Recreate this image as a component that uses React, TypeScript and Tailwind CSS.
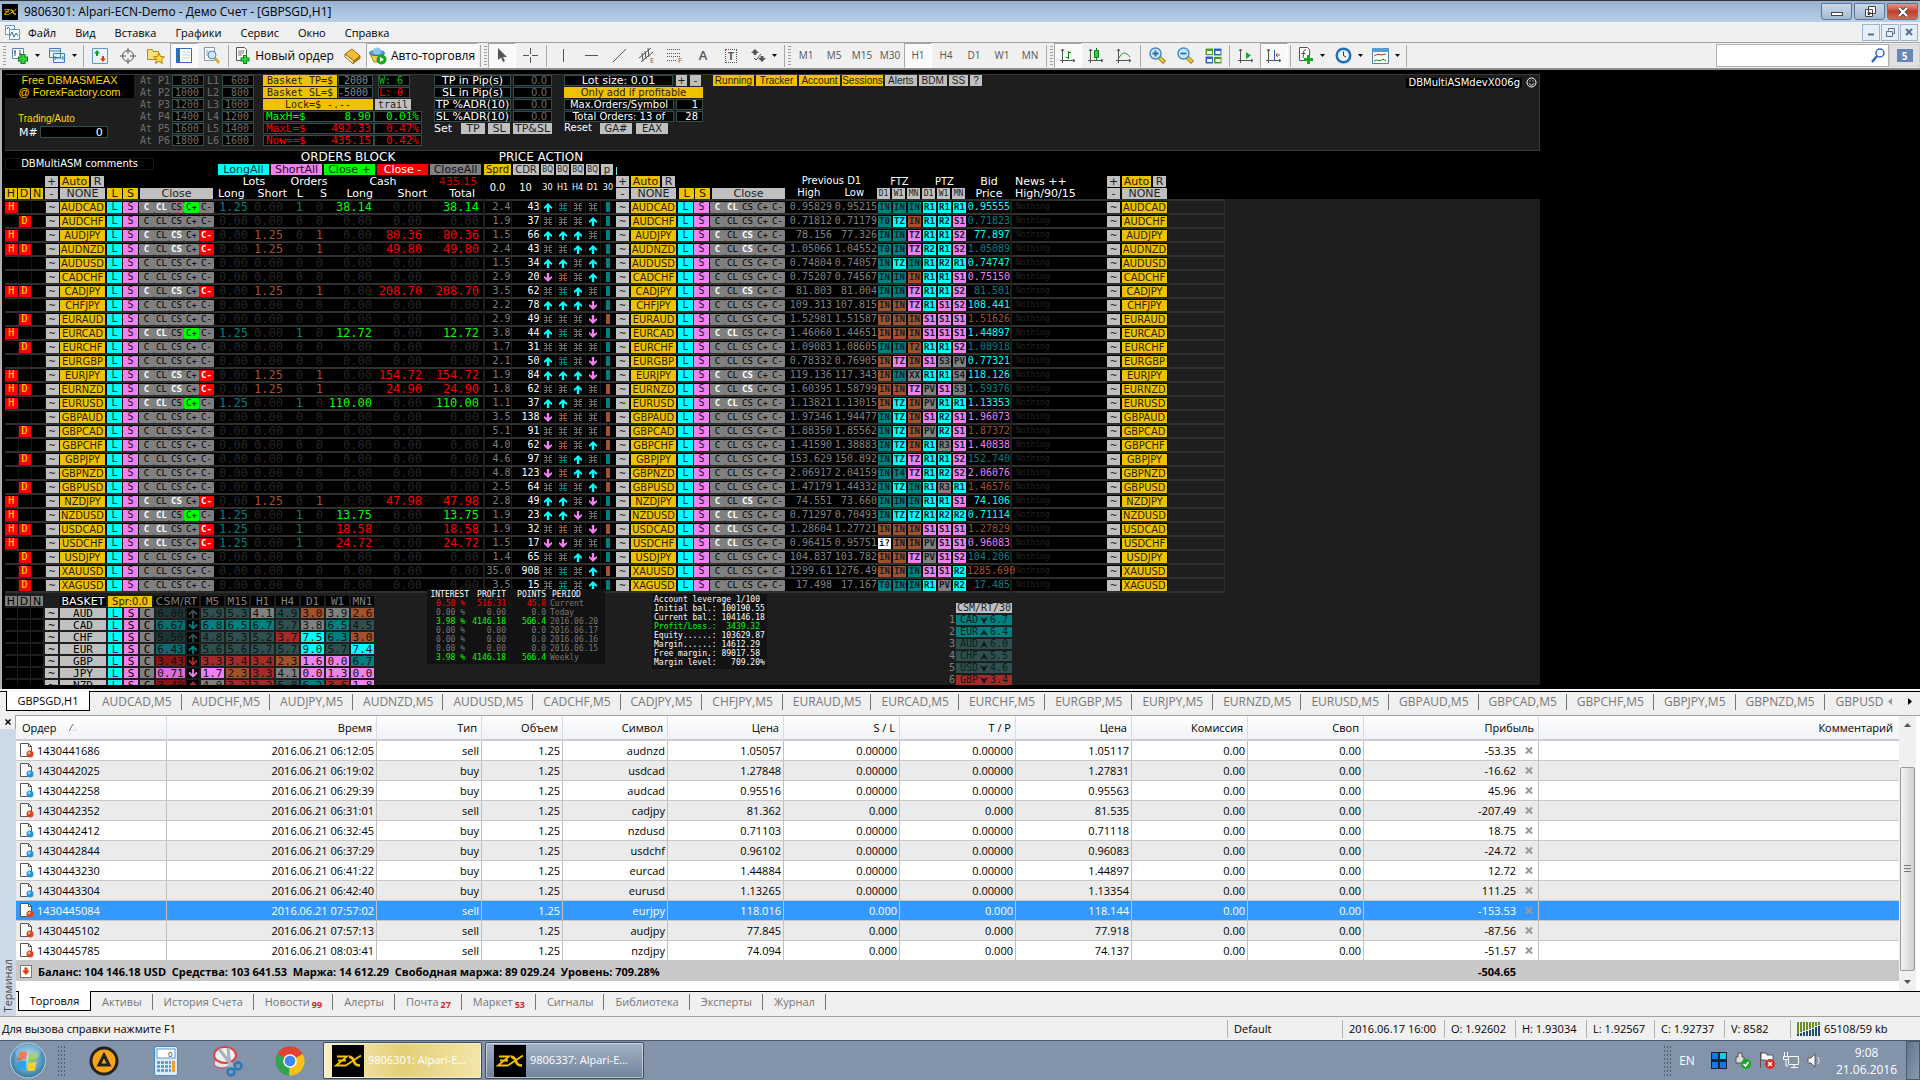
import { type ReactNode } from "react";
import { clsx } from "clsx";

const COLORS = {
  t: { bg: "bg-[#008080]", text: "text-[#008080]" },
  c: { bg: "bg-[#00ffff]", text: "text-[#00ffff]" },
  v: { bg: "bg-[#ee82ee]", text: "text-[#ee82ee]" },
  b: { bg: "bg-[#a0522d]", text: "text-[#a0522d]" },
  g: { bg: "bg-[#808080]", text: "text-[#696969]" },
  s: { bg: "bg-[#2f4f4f]", text: "text-[#2f4f4f]" },
  r: { bg: "bg-[#a52a2a]", text: "text-[#a52a2a]" },
  w: { bg: "bg-white", text: "text-white" },
};

type ColorKey = keyof typeof COLORS;

const MONO = "font-['DejaVu_Sans_Mono',monospace]";
const TAHOMA = "font-['DejaVu_Sans_Condensed','DejaVu_Sans',sans-serif]";

// symbol | flags | side | profit | spread | cdr | arrows | bar | high | low | zones | bid | bid colour
const PAIRS = `
AUDCAD|H|L|38.14|2.4|43|utxx|t|0.95829|0.95215|INt INt INt R1c R1c R1c|0.95555|c
AUDCHF|D|||1.9|37|xxxu|t|0.71812|0.71179|T0t TZc INb R1c R2c S1v|0.71823|t
AUDJPY|H|S|-80.36|1.5|66|uuux|t|78.156|77.326|INt INt TZv R1c R1c S2v|77.897|c
AUDNZD|HD|S|-49.80|2.4|43|xxuu|t|1.05066|1.04552|T0t INt TZv R2c R1c S2v|1.05089|t
AUDUSD||||1.5|34|uuxu|t|0.74804|0.74057|INt TZc INt R1c R2c R1c|0.74747|c
CADCHF||||2.9|20|dbxu|t|0.75207|0.74567|INt INt INb R1c R1c S1v|0.75150|v
CADJPY|HD|S|-208.70|3.5|62|xtux|t|81.803|81.004|INt INt TZv R1c R1c S2v|81.501|t
CHFJPY||||2.2|78|uuud|t|109.313|107.815|INb INb TZv R1c S1v S2v|108.441|c
EURAUD|D|||2.9|49|xxxd|b|1.52981|1.51587|T0b INb INb S1v S1v S1v|1.51626|b
EURCAD|H|L|12.72|3.8|44|utxd|t|1.46060|1.44651|INb INb INb S1v S1v S1v|1.44897|c
EURCHF|D|||1.7|31|xxxx|t|1.09083|1.08605|INt INt T2b R1c R1c S2v|1.08918|t
EURGBP||||2.1|50|utxd|t|0.78332|0.76905|INb TZv INb S1v S3g PVg|0.77321|c
EURJPY|H|S|-154.72|1.9|84|uuud|t|119.136|117.343|INb INt XXg R1c R1c S4g|118.126|c
EURNZD|HD|S|-24.90|1.8|62|xxux|b|1.60395|1.58799|INb INb TZv PVg S1v S3g|1.59376|t
EURUSD|H|L|110.00|1.1|37|uuxx|t|1.13821|1.13015|INb TZc INb PVg R1c R1c|1.13353|c
GBPAUD||||3.5|138|dbxx|b|1.97346|1.94477|INt TZc INb S1v R2c S1v|1.96073|v
GBPCAD|D|||5.1|91|xxxx|b|1.88350|1.85562|INt TZc INb PVg R2c S1v|1.87372|b
GBPCHF||||4.0|62|dbxu|b|1.41590|1.38883|INt TZc INb R1c R3g S1v|1.40838|v
GBPJPY|D|||4.6|97|xtux|t|153.629|150.892|INt TZc TZv R1c R1c S2v|152.740|t
GBPNZD||||4.8|123|dbuu|b|2.06917|2.04159|INt T4t TZv R1c R2c S2v|2.06076|v
GBPUSD|D|||2.5|64|xtxu|b|1.47179|1.44332|INt TZc INt R1c R3g R1c|1.46576|b
NZDJPY|H|S|-47.98|2.8|49|uuxd|t|74.551|73.660|INt INt INt R1c R1c S1v|74.106|c
NZDUSD|H|L|13.75|1.9|23|uudx|t|0.71297|0.70493|INt TZc TZc R1c R2c R2c|0.71114|c
USDCAD|HD|L|-18.58|1.9|32|xbxd|b|1.28604|1.27721|INb INb INb S1v S1v S1v|1.27829|b
USDCHF|H|L|-24.72|1.5|17|ddxx|t|0.96415|0.95751|i?w INb INb PVg S1v S1v|0.96083|v
USDJPY|D|||1.4|65|xxud|t|104.837|103.782|INb INb TZv PVg S1v S2v|104.206|t
XAUUSD|D|||35.0|908|xtxu|b|1299.61|1276.49|INb INb INt S1v S1v R2c|1285.690|b
XAGUSD|D|||3.5|15|xtxu|t|17.498|17.167|T0t INt INt R1c PVg R2c|17.485|t`
  .trim()
  .split("\n")
  .map((line) => {
    const [symbol, flags, side, profit, spread, cdr, arrows, bar, high, low, zones, bid, bidColor] = line.split("|");
    return { symbol, flags, side, profit, spread, cdr, arrows, bar, high, low, zones: zones.split(" "), bid, bidColor };
  });

type Pair = (typeof PAIRS)[number];

const BASKETS = [
  { name: "AUD", csm: "6.00", bg: "bg-[#1d3636]", up: true, color: "s", values: "5.9s 5.3s 4.1g 4.9s 3.0b 3.9g 2.6b" },
  { name: "CAD", csm: "6.67", bg: "bg-[#066e6e]", up: false, color: "t", values: "6.8t 6.5t 6.7t 5.7s 3.8g 6.5t 4.5s" },
  { name: "CHF", csm: "5.50", bg: "bg-[#1d3636]", up: true, color: "s", values: "4.8s 5.3s 5.2s 3.7r 7.5c 6.3t 3.0b" },
  { name: "EUR", csm: "6.43", bg: "bg-[#066e6e]", up: true, color: "t", values: "5.6s 5.6s 5.7s 5.7s 9.0c 5.7s 7.4c" },
  { name: "GBP", csm: "3.43", bg: "bg-[#8b1515]", up: false, color: "r", values: "3.3r 3.4r 3.4r 2.3b 1.6v 0.0v 6.7t" },
  { name: "JPY", csm: "0.71", bg: "bg-[#da70d6]", up: false, color: "v", values: "1.7v 2.3b 3.3r 4.1g 0.0v 1.3v 0.0v" },
  { name: "NZD", csm: "3.40", bg: "bg-[#8b1515]", up: true, color: "r", values: "4.0g 3.2r 3.2r 5.8s 6.2t 3.6r 1.8v" },
];

const ORDERS = `
1430441686|06:12:05|sell|audnzd|1.05057|0.00000|1.05117|-53.35
1430442025|06:19:02|buy|usdcad|1.27848|0.00000|1.27831|-16.62
1430442258|06:29:39|buy|audcad|0.95516|0.00000|0.95563|45.96
1430442352|06:31:01|sell|cadjpy|81.362|0.000|81.535|-207.49
1430442412|06:32:45|buy|nzdusd|0.71103|0.00000|0.71118|18.75
1430442844|06:37:29|buy|usdchf|0.96102|0.00000|0.96083|-24.72
1430443230|06:41:22|buy|eurcad|1.44884|0.00000|1.44897|12.72
1430443304|06:42:40|buy|eurusd|1.13265|0.00000|1.13354|111.25
1430445084|07:57:02|sell|eurjpy|118.016|0.000|118.144|-153.53
1430445102|07:57:13|sell|audjpy|77.845|0.000|77.918|-87.56
1430445785|08:03:41|sell|nzdjpy|74.094|0.000|74.137|-51.57`
  .trim()
  .split("\n")
  .map((line) => line.split("|"));

const SELECTED_ORDER = "1430445084";

const CHART_TABS = [
  "AUDCAD", "AUDCHF", "AUDJPY", "AUDNZD", "AUDUSD", "CADCHF", "CADJPY", "CHFJPY", "EURAUD", "EURCAD",
  "EURCHF", "EURGBP", "EURJPY", "EURNZD", "EURUSD", "GBPAUD", "GBPCAD", "GBPCHF", "GBPJPY", "GBPNZD",
];

const TERMINAL_TABS: { label: string; count?: number }[] = [
  { label: "Активы" },
  { label: "История Счета" },
  { label: "Новости", count: 99 },
  { label: "Алерты" },
  { label: "Почта", count: 27 },
  { label: "Маркет", count: 53 },
  { label: "Сигналы" },
  { label: "Библиотека" },
  { label: "Эксперты" },
  { label: "Журнал" },
];

/* ---------- window chrome ---------- */

function AlpariLogo({ className }: { className?: string }) {
  return (
    <svg className={className} viewBox="0 0 32 32" aria-hidden="true">
      <rect width="32" height="32" fill="#000" />
      <path d="M5 11.500h10L4 20.500h9M6 15.500h8M29 10.500L13 21" fill="none" stroke="#f2c200" strokeWidth="1.800" />
      <path d="M17 11.500q4 1 5 5t6 4" fill="none" stroke="#f2c200" strokeWidth="2.600" />
    </svg>
  );
}

function TitleBar() {
  const button = "flex h-[17px] w-[31px] items-center justify-center rounded-b-[3px] border border-[#5f7690]";
  return (
    <header className="flex h-[22px] items-center gap-1.5 border-t border-[#333] bg-linear-to-b from-[#97b1d0] to-[#b9d0ea] px-0.5">
      <AlpariLogo className="size-4" />
      <h1 className="flex-1 text-xs leading-5 whitespace-nowrap">9806301: Alpari-ECN-Demo - Демо Счет - [GBPSGD,H1]</h1>
      <div className="flex gap-0.5">
        <button aria-label="Свернуть" className={clsx(button, "bg-linear-to-b from-[#c9d8ea] to-[#a4bad3]")}>
          <svg width="12" height="10"><rect x=".5" y="5.500" width="11" height="3" fill="#fff" stroke="#444" /></svg>
        </button>
        <button aria-label="Развернуть" className={clsx(button, "bg-linear-to-b from-[#c9d8ea] to-[#a4bad3]")}>
          <svg width="12" height="12" fill="#fff" stroke="#444"><path d="M4.500.5h7v7h-7zM1.500 3.500h7v7h-7zM4 6.500h2v2H4z" /></svg>
        </button>
        <button aria-label="Закрыть" className={clsx(button, "border-[#5c1c18] bg-linear-to-b from-[#e0988a] via-[#c2402a] to-[#d46a50]")}>
          <svg width="12" height="10"><path d="M2 1l8 8M10 1L2 9" stroke="#444" strokeWidth="4" /><path d="M2 1l8 8M10 1L2 9" stroke="#fff" strokeWidth="2.200" /></svg>
        </button>
      </div>
    </header>
  );
}

function MenuBar() {
  const mdi = "flex h-[17px] w-[18px] items-center justify-center border border-[#9fb2c6] bg-[#e4effa]";
  return (
    <nav className="flex h-[21px] items-center border-b border-[#a0a0a0] bg-[#f0f0f0] pr-0.5 pl-[5px]">
      <svg width="15" height="15" viewBox="0 0 15 15" fill="#fff" stroke="#5b9bd5">
        <path d="M.5.5h9v9h-9z" /><path d="M4.500 4.500h10v10h-10z" /><path d="M5 11l2-4 2 5 2-4 2 3M2 4l1-2 2 2" fill="none" stroke="#2f6fb5" />
      </svg>
      <div className="flex flex-1 gap-[19px] pl-2 text-[11px] leading-none">
        {["Файл", "Вид", "Вставка", "Графики", "Сервис", "Окно", "Справка"].map((item) => (
          <button key={item}>{item}</button>
        ))}
      </div>
      <div className="flex gap-px">
        <button aria-label="Свернуть окно графика" className={mdi}><svg width="8" height="8"><path d="M1 6.500h6" stroke="#5a7088" strokeWidth="2" /></svg></button>
        <button aria-label="Восстановить окно графика" className={mdi}>
          <svg width="9" height="9" fill="none" stroke="#5a7088"><path d="M2.500 2.500v-2h6v5h-2M.5 3.500h6v5h-6z" /></svg>
        </button>
        <button aria-label="Закрыть окно графика" className={mdi}><svg width="8" height="8"><path d="M1 1l6 6M7 1L1 7" stroke="#5a7088" strokeWidth="2" /></svg></button>
      </div>
    </nav>
  );
}

function ToolButton({ label, pressed, wide, children }: { label: string; pressed?: boolean; wide?: boolean; children: ReactNode }) {
  return (
    <button
      aria-label={label}
      className={clsx(
        "flex h-[25px] items-center justify-center gap-1.5 text-[10px] text-[#555]",
        wide ? "w-[37px]" : "w-7",
        pressed && "border border-[#a8a8a8] border-r-white border-b-white bg-[#f9f9f9]"
      )}
    >
      {children}
      {wide && <svg width="5" height="3"><path d="M0 0h5L2.500 3z" fill="#000" /></svg>}
    </button>
  );
}

function Sep() {
  return <span className="mx-[2px] h-[22px] w-px shrink-0 bg-[#a8a8a8]" />;
}

function Grip() {
  return <span className="mx-px h-[20px] w-[3px] shrink-0 bg-[repeating-linear-gradient(#a0a0a0_0_1px,transparent_1px_3px)]" />;
}

function Axes({ children }: { children: ReactNode }) {
  return (
    <svg width="16" height="16" fill="none" stroke="#555">
      <path d="M2.500 1v14M0 12.500h15M1 3l1.500-2L4 3M13 11l2 1.500-2 1.500" />
      {children}
    </svg>
  );
}

function Magnifier({ plus }: { plus?: boolean }) {
  return (
    <svg width="17" height="17" viewBox="0 0 17 17" fill="none">
      <path d="M10 10l5.500 5.500" stroke="#8a6a10" strokeWidth="4" />
      <path d="M10 10l5 5" stroke="#f5c52e" strokeWidth="2.500" />
      <circle cx="6.500" cy="6.500" r="5.500" fill="#cfe9fb" stroke="#3f87c4" strokeWidth="1.400" />
      <path d={plus ? "M3.500 6.500h6M6.500 3.500v6" : "M3.500 6.500h6"} stroke="#1f6fae" strokeWidth="1.800" />
    </svg>
  );
}

function Toolbar() {
  return (
    <div className="flex h-[27px] items-center border-b-2 border-[#8c8c8c] bg-[#f0f0f0] pl-0.5">
      <Grip />
      <ToolButton label="Новый график" wide>
        <svg width="18" height="18" viewBox="0 0 18 18">
          <path d="M1.500 1.500h11v10h-11z" fill="#fff" stroke="#5588b8" /><path d="M4 3v6M9 3v6M3 5h2M8 7h2" stroke="#456" />
          <path d="M12 7v10M7 12h10" stroke="#0a7d14" strokeWidth="5" /><path d="M12 8v8M8 12h8" stroke="#2fd33c" strokeWidth="3" />
        </svg>
      </ToolButton>
      <ToolButton label="Профили" wide>
        <svg width="18" height="18" fill="#e4f0fb" stroke="#3f7fc0"><path d="M1.500 1.500h11v9h-11zM5.500 6.500h11v9h-11zM1.500 4h11M7 11h8M7 9v4M15 9v4" /></svg>
      </ToolButton>
      <Sep />
      <ToolButton label="Обзор рынка">
        <svg width="16" height="16"><path d="M.5.5h15v15H.5z" fill="#eef6fd" stroke="#5b9bd5" /><path d="M5 2l3 3.500H6V8H4V5.500H2z" fill="#12a01c" /><path d="M11 14l3-3.500h-2V8h-2v2.500H8z" fill="#d8400e" /></svg>
      </ToolButton>
      <ToolButton label="Окно данных">
        <svg width="16" height="16" fill="none" stroke="#555"><circle cx="8" cy="8" r="5.500" /><path d="M8 0v6M8 10v6M0 8h6M10 8h6" /></svg>
      </ToolButton>
      <ToolButton label="Навигатор">
        <svg width="18" height="16"><path d="M.5 1.500h5l1 2h5v8H.5z" fill="#f7df7c" stroke="#b08a1c" /><path d="M12 5l1.600 3.500 3.900.4-2.900 2.600.8 3.900L12 13.400l-3.400 2 .8-3.900-2.900-2.600 3.900-.4z" fill="#ffd83a" stroke="#b07d10" /></svg>
      </ToolButton>
      <ToolButton label="Терминал" pressed>
        <svg width="16" height="15"><path d="M.5.5h15v14H.5z" fill="#fff" stroke="#2d6db5" /><path d="M0 0h4v15H0z" fill="#2d6db5" /><path d="M6 4h8M6 7h8M6 10h8" stroke="#b8d4f0" /></svg>
      </ToolButton>
      <ToolButton label="Тестер стратегий">
        <svg width="18" height="18"><path d="M1.500.5h10v13h-10z" fill="#fff" stroke="#8899aa" /><path d="M4 3v6M7 4v4" stroke="#99a" /><circle cx="9" cy="8" r="4" fill="#cfe6f8" stroke="#4a86b8" /><path d="M12 11l4 5" stroke="#d9a520" strokeWidth="2.500" /></svg>
      </ToolButton>
      <Sep />
      <button className="flex h-[25px] w-[107px] items-center justify-center gap-1 text-xs leading-none whitespace-nowrap text-black">
        <svg className="shrink-0" width="16" height="18"><path d="M1.500.5h8l2 2v11h-10z" fill="#fff" stroke="#555" /><path d="M3 4h6M3 6h6M3 8h4" stroke="#777" /><path d="M10 8v9M5.500 12.500h9" stroke="#0a8a14" strokeWidth="4" /><path d="M10 9v7M6.500 12.500h7" stroke="#2fd33c" strokeWidth="2" /></svg>
        Новый ордер
      </button>
      <ToolButton label="MetaEditor">
        <svg width="17" height="16"><path d="M1 6l7-5 8 7-6 5z" fill="#f0bf35" stroke="#9a6c0c" /><path d="M1 6v3l8 6.500 1-2.500z" fill="#fff3c4" stroke="#9a6c0c" /><path d="M10 13l6-5v2.500l-7 5z" fill="#c08a18" stroke="#9a6c0c" /></svg>
      </ToolButton>
      <button className="flex h-[25px] w-[112px] items-center justify-center gap-1 border border-[#a8a8a8] border-r-white border-b-white bg-[#f9f9f9] text-xs leading-none whitespace-nowrap text-black">
        <svg className="shrink-0" width="18" height="18"><path d="M1 7c4 2 10 2 14 0l-3 8H5z" fill="#f4cf4a" stroke="#a8831c" /><ellipse cx="8" cy="6" rx="7.500" ry="2.500" fill="#5aa6dc" stroke="#2f6fa5" /><ellipse cx="8" cy="4" rx="4" ry="3.500" fill="#8cc6ee" /><circle cx="12.500" cy="12.500" r="5" fill="#17a81f" /><path d="M11 10v5l4-2.500z" fill="#fff" /></svg>
        Авто-торговля
      </button>
      <Sep />
      <Grip />
      <ToolButton label="Курсор" pressed>
        <svg width="10" height="15"><path d="M1 0v12l3-2.500L6 14l2-1-2-4h4z" fill="#555" /></svg>
      </ToolButton>
      <ToolButton label="Перекрестие"><svg width="15" height="15" stroke="#555"><path d="M7.500 0v6M7.500 9v6M0 7.500h6M9 7.500h6" /></svg></ToolButton>
      <Sep />
      <ToolButton label="Вертикальная линия"><svg width="3" height="13"><path d="M1.500 0v13" stroke="#555" /></svg></ToolButton>
      <ToolButton label="Горизонтальная линия"><svg width="13" height="3"><path d="M0 1.500h13" stroke="#555" /></svg></ToolButton>
      <ToolButton label="Трендовая линия"><svg width="13" height="13"><path d="M0 13L13 0" stroke="#555" /></svg></ToolButton>
      <ToolButton label="Равноудаленный канал">
        <svg width="17" height="17" stroke="#555" fill="none"><path d="M0 11L12 1M2 15L14 5M3 6l1 8M6 4l1 8M9 1l1 9" /><text x="11" y="16" fontSize="7" fill="#555" stroke="none">E</text></svg>
      </ToolButton>
      <ToolButton label="Линии Фибоначчи">
        <svg width="17" height="17" stroke="#555" fill="none"><path d="M0 2.500h14M0 6.500h14M0 9.500h14M0 13.500h9" strokeDasharray="1 1" /><text x="11" y="16" fontSize="7" fill="#555" stroke="none">F</text></svg>
      </ToolButton>
      <ToolButton label="Текст"><span className="text-[13px] font-semibold">A</span></ToolButton>
      <ToolButton label="Текстовая метка"><span className="border border-dotted border-[#555] px-0.5 text-[11px] leading-3 font-bold">T</span></ToolButton>
      <ToolButton label="Стрелки" wide>
        <svg width="15" height="14"><path d="M4 0l4 4H5.500v2h-3V4H0zM11 13l4-4h-2.500V7h-3v2H7z" fill="#555" /><path d="M3 9l2 2 5-6" fill="none" stroke="#555" /></svg>
      </ToolButton>
      <Sep />
      <Grip />
      {["M1", "M5", "M15", "M30", "H1", "H4", "D1", "W1", "MN"].map((tf) => (
        <ToolButton key={tf} label={tf} pressed={tf === "H1"}>{tf}</ToolButton>
      ))}
      <Sep />
      <Grip />
      <ToolButton label="Бары" pressed><Axes><path d="M8.500 3v8M8 4.500h3M6 9.500h2.500" stroke="#0a8a14" /></Axes></ToolButton>
      <ToolButton label="Свечи"><Axes><path d="M8.500 0v12" stroke="#0a7d14" /><path d="M6.500 2.500h4v7h-4z" fill="#2fd33c" stroke="#0a7d14" /></Axes></ToolButton>
      <ToolButton label="Линия"><Axes><path d="M3 10c3-6 6-7 11-1" stroke="#2a9a34" /></Axes></ToolButton>
      <Sep />
      <ToolButton label="Увеличить"><Magnifier plus /></ToolButton>
      <ToolButton label="Уменьшить"><Magnifier /></ToolButton>
      <ToolButton label="Окна мозаикой">
        <svg width="17" height="16" stroke="#fff"><path d="M0 0h8.500v8H0zM8.500 8H17v8H8.500z" fill="#4a9c1c" /><path d="M8.500 0H17v8H8.500zM0 8h8.500v8H0z" fill="#2b62c4" /><path d="M2 4.500h5M10.500 4.500h5M2 12.500h5M10.500 12.500h5" strokeWidth="3" /></svg>
      </ToolButton>
      <Sep />
      <ToolButton label="Автопрокрутка"><Axes><path d="M8 4v7l5-3.500z" fill="#1da528" stroke="none" /></Axes></ToolButton>
      <ToolButton label="Сдвиг графика" pressed><Axes><path d="M8.500 2v10" stroke="#2b62c4" /><path d="M14 7H10M11.500 5L10 7l1.500 2" stroke="#c8400e" /></Axes></ToolButton>
      <Sep />
      <ToolButton label="Индикаторы" wide>
        <svg width="16" height="18"><path d="M1.500.5h8l2 2v11h-10z" fill="#fff" stroke="#555" /><path d="M8 3c-3-1-2 3-3 8M3.500 6.500h4" fill="none" stroke="#444" /><path d="M10.500 8v9M6 12.500h9" stroke="#17a81f" strokeWidth="3" /></svg>
      </ToolButton>
      <ToolButton label="Периоды" wide>
        <svg width="17" height="17"><circle cx="8.500" cy="8.500" r="8" fill="#1d6fc0" /><circle cx="8.500" cy="8.500" r="5.500" fill="#e8f4ff" /><path d="M8.500 4.500v4l2.500 1.500" fill="none" stroke="#234" /></svg>
      </ToolButton>
      <ToolButton label="Шаблоны" wide>
        <svg width="17" height="16"><path d="M.5.5h16v15H.5z" fill="#fff" stroke="#4a86b8" /><path d="M0 0h17v4H0z" fill="#5b9bd5" /><path d="M2 8l4-2 3 1 5-1" fill="none" stroke="#b8300e" /><path d="M2 13l3-1 3 1 3-2 3 2" fill="none" stroke="#0a8a14" /></svg>
      </ToolButton>
      <Sep />
      <div className="ml-auto flex h-[23px]">
        <div className="flex w-[173px] items-center border border-[#b0b0b0] bg-white">
          <input aria-label="Поиск" className="min-w-0 flex-1 px-1 text-xs outline-none" />
          <svg width="17" height="15" fill="none"><circle cx="9" cy="5" r="4" stroke="#3a66c8" strokeWidth="1.500" /><path d="M6 8l-5 6" stroke="#3a66c8" strokeWidth="2.500" /></svg>
        </div>
        <button aria-label="Сообщения" className="flex w-[31px] items-center justify-center border border-[#d0d0d0] bg-[#e0e0e0]">
          <span className="flex h-[13px] w-4 items-center justify-center bg-[#6a85b8] text-[10px] leading-none font-bold text-white">5</span>
        </button>
      </div>
    </div>
  );
}

/* ---------- expert advisor panel ---------- */

const BOX = "flex h-[11px] items-center border border-[#2f4f4f] bg-black leading-none whitespace-nowrap";
const SILVER = "flex h-[11px] items-center justify-center bg-[#c0c0c0] leading-none whitespace-nowrap text-[#1e1e1e]";
const GOLD = "flex h-[11px] items-center justify-center bg-[#eec200] leading-none whitespace-nowrap text-[#2b1d00]";

function SettingsPanel() {
  const levels = [["800", "600"], ["1000", "800"], ["1200", "1000"], ["1400", "1200"], ["1600", "1400"], ["1800", "1600"]];
  const results = [
    ["MaxH=$", "8.90", "0.01%", "text-[#00ff00]"],
    ["MaxL=$", "492.33", "0.47%", "text-[#ff0000]"],
    ["Now==$", "435.15", "0.42%", "text-[#ff0000]"],
  ];
  return (
    <section className="flex h-[77px] items-start border border-l-0 border-[#3a3a3a] bg-[#1e1e1e] font-['DejaVu_Sans',sans-serif] text-[10px] leading-none whitespace-nowrap">
      <div className="w-[135px] text-[#ffd800]">
        <div className="flex w-[129px] flex-col gap-px bg-black text-center font-['Liberation_Sans',sans-serif] text-[11px]">
          <span>Free DBMASMEAX</span>
          <span>@ ForexFactory.com</span>
        </div>
        <p className="pt-4 pl-[13px] font-['Liberation_Sans',sans-serif]">Trading/Auto</p>
        <label className="flex items-center pt-0.5 pl-[14px] text-[11px] text-white">
          M#
          <input readOnly value="0" className="ml-0.5 h-3 w-[68px] border border-[#2f4f4f] bg-black pr-1 text-right" />
        </label>
      </div>
      <div className={clsx("flex w-[123px] flex-col gap-px text-[#6e6e6e]", MONO)}>
        {levels.map(([p, l], i) => (
          <div key={i} className="flex items-center gap-px">
            <span className="w-[31px]">At P{i + 1}</span>
            <span className={clsx(BOX, "w-8 justify-end pr-1")}>{p}</span>
            <span className="w-4 pl-0.5">L{i + 1}</span>
            <span className={clsx(BOX, "w-8 justify-end pr-1")}>{l}</span>
          </div>
        ))}
      </div>
      <div className={clsx("flex w-[171px] flex-col gap-px", MONO)}>
        <div className="flex gap-px">
          <button className={clsx(GOLD, "w-[74px]")}>Basket TP=$</button>
          <span className={clsx(BOX, "w-[35px] justify-end pr-1 text-[#8a8a8a]")}>2000</span>
          <span className={clsx(BOX, "ml-1 w-8 text-[#00c800]")}>W: 6</span>
        </div>
        <div className="flex gap-px">
          <button className={clsx(GOLD, "w-[74px]")}>Basket SL=$</button>
          <span className={clsx(BOX, "w-[35px] justify-end pr-1 text-[#8a8a8a]")}>-5000</span>
          <span className={clsx(BOX, "ml-1 w-8 text-[#ff0000]")}>L: 0</span>
        </div>
        <div className="flex gap-0.5">
          <button className={clsx(GOLD, "w-[110px]")}>Lock=$ -.--</button>
          <button className={clsx(SILVER, "w-9")}>trail</button>
        </div>
        {results.map(([name, cash, percent, color]) => (
          <div key={name} className={clsx("flex text-[11px]", color)}>
            <span className={clsx(BOX, "w-[111px] justify-between px-0.5")}><span>{name}</span><span>{cash}</span></span>
            <span className={clsx(BOX, "w-12 justify-end pr-0.5")}>{percent}</span>
          </div>
        ))}
      </div>
      <div className="flex w-[130px] flex-col gap-px text-[11px] text-white">
        {["TP in Pip(s)", "SL in Pip(s)", "TP %ADR(10)", "SL %ADR(10)"].map((name) => (
          <div key={name} className="flex gap-0.5">
            <span className={clsx(BOX, "w-[77px] justify-center")}>{name}</span>
            <span className={clsx(BOX, "w-[39px] justify-end pr-1 text-[10px] text-[#6e6e6e]")}>0.0</span>
          </div>
        ))}
        <div className="flex gap-[3px]">
          <span className="w-6">Set</span>
          <button className={clsx(SILVER, "w-6")}>TP</button>
          <button className={clsx(SILVER, "w-[22px]")}>SL</button>
          <button className={clsx(SILVER, "w-[39px]")}>TP&amp;SL</button>
        </div>
      </div>
      <div className="flex w-[149px] flex-col gap-px text-white">
        <div className="flex gap-[3px]">
          <span className={clsx(BOX, "w-[109px] justify-center text-[11px]")}>Lot size: 0.01</span>
          <button className={clsx(SILVER, "w-[11px]")}>+</button>
          <button className={clsx(SILVER, "w-[11px]")}>-</button>
        </div>
        <button className={clsx(GOLD, "w-[139px]")}>Only add if profitable</button>
        <div className="flex gap-0.5">
          <span className={clsx(BOX, "w-[110px] justify-center")}>Max.Orders/Symbol</span>
          <span className={clsx(BOX, "w-[27px] justify-end pr-1")}>1</span>
        </div>
        <div className="flex gap-0.5">
          <span className={clsx(BOX, "w-[110px] justify-center")}>Total Orders: 13 of</span>
          <span className={clsx(BOX, "w-[27px] justify-end pr-1")}>28</span>
        </div>
        <div className="flex gap-1">
          <span className="w-8">Reset</span>
          <button className={clsx(SILVER, "w-8")}>GA#</button>
          <button className={clsx(SILVER, "w-8")}>EAX</button>
        </div>
      </div>
      <div className="flex flex-1 gap-0.5 font-['Liberation_Sans',sans-serif]">
        {["Running", "Tracker", "Account", "Sessions"].map((name) => (
          <button key={name} className={clsx(GOLD, "w-[41px]")}>{name}</button>
        ))}
        {["Alerts", "BDM", "SS", "?"].map((name) => (
          <button key={name} className={clsx(SILVER, "px-[3px]")}>{name}</button>
        ))}
      </div>
      <div className="flex items-center gap-1 pt-0.5 pr-0.5 text-white">
        <span className="bg-black px-0.5">DBMultiASMdevX006g</span>
        <svg width="11" height="11" fill="none" stroke="#fff"><circle cx="5.500" cy="5.500" r="4.500" /><path d="M3 6.500c1 2 4 2 5 0M4 3.500v1M7 3.500v1" /></svg>
      </div>
    </section>
  );
}

function SymbolHead({ className }: { className?: string }) {
  return (
    <div className={clsx("flex flex-col gap-px text-[11px]", className)}>
      <div className="flex gap-0.5">
        <button className={clsx(SILVER, "w-[13px]")}>+</button>
        <button className={clsx(GOLD, "w-[29px]")}>Auto</button>
        <button className={clsx(SILVER, "w-[13px]")}>R</button>
      </div>
      <div className="flex gap-0.5">
        <button className={clsx(SILVER, "w-[13px]")}>-</button>
        <button className={clsx(SILVER, "w-[45px]")}>NONE</button>
      </div>
    </div>
  );
}

function SideHead() {
  return (
    <div className="flex gap-px self-end text-[11px]">
      <button className={clsx(GOLD, "w-[15px]")}>L</button>
      <button className={clsx(GOLD, "w-[15px]")}>S</button>
      <button className={clsx(SILVER, "ml-px w-[73px]")}>Close</button>
    </div>
  );
}

function DashboardHead() {
  const col = "flex h-12 flex-col justify-end gap-px";
  const totals: [string, string][] = [
    ["LongAll", "bg-[#00ffff] text-[#06343a]"],
    ["ShortAll", "bg-[#ee82ee] text-[#2c0a2c]"],
    ["Close +", "bg-[#00ff00] text-[#063a06]"],
    ["Close -", "bg-[#ff0000] text-white"],
    ["CloseAll", "bg-[#808080] text-[#111]"],
  ];
  return (
    <div className="flex h-12 items-start font-['DejaVu_Sans',sans-serif] text-[11px] leading-none whitespace-nowrap text-white">
      <div className="flex h-12 w-[213px] flex-col justify-between">
        <p className="mt-[7px] w-[149px] border border-[#141414] text-center text-[10px] leading-[10px]">DBMultiASM comments</p>
        <div className="flex items-end">
          <div className="flex w-10 gap-px">
            {["H", "D", "N"].map((f) => <button key={f} className={clsx(GOLD, "w-3")}>{f}</button>)}
          </div>
          <SymbolHead className="w-[62px]" />
          <SideHead />
        </div>
      </div>
      <div className={clsx(col, "w-[266px]")}>
        <p className="h-[11px] pr-[6px] text-center text-xs leading-[11px]">ORDERS BLOCK</p>
        <div className="flex gap-0.5">
          {totals.map(([name, color]) => (
            <button key={name} className={clsx("flex h-[11px] w-[51px] items-center justify-center", color)}>{name}</button>
          ))}
        </div>
        <div className="grid h-[11px] grid-cols-[72px_38px_110px_40px] text-center">
          <span>Lots</span><span>Orders</span><span>Cash</span><span className="text-[#d00000]">435.15</span>
        </div>
        <div className="grid h-[11px] grid-cols-[30px_39px_20px_20px_46px_54px_48px] text-right">
          <span className="text-left">Long</span><span>Short</span><span className="pr-1">L</span><span>S</span><span>Long</span><span>Short</span><span>Total</span>
        </div>
      </div>
      <div className={clsx(col, "w-[132px]")}>
        <p className="h-[11px] pr-[18px] text-center text-xs leading-[11px]">PRICE ACTION</p>
        <div className="flex gap-0.5 text-[10px]">
          <button className={clsx(GOLD, "w-[27px]")}>Sprd</button>
          <button className={clsx(SILVER, "w-[26px]")}>CDR</button>
          {[1, 2, 3, 4].map((n) => <button key={n} className={clsx(SILVER, TAHOMA, "w-[13px] text-[8px]")}>BQ</button>)}
          <button className={clsx(SILVER, "w-3")}>p</button>
        </div>
        <div className={clsx("grid h-[23px] grid-cols-[27px_29px_15px_15px_15px_15px_16px] items-center text-center", TAHOMA)}>
          <span>0.0</span><span>10</span>
          {["30", "H1", "H4", "D1", "30"].map((p, i) => <span key={i} className="text-[9px]">{p}</span>)}
        </div>
      </div>
      <div className={clsx(col, "w-[170px] justify-between")}>
        <span className="mt-0.5 h-2 w-px bg-[#7fe0e8]" />
        <div className="flex">
          <SymbolHead className="w-[63px]" />
          <SideHead />
        </div>
      </div>
      <div className={clsx(col, "w-[91px] text-center")}>
        <span className="h-[11px] text-[10px]">Previous D1</span>
        <div className="grid h-[11px] grid-cols-2 text-[10px]"><span>High</span><span>Low</span></div>
      </div>
      <div className={clsx(col, "w-[90px] text-center")}>
        <div className={clsx("grid h-[11px] grid-cols-2", TAHOMA)}><span>FTZ</span><span>PTZ</span></div>
        <div className="flex gap-0.5 text-[8px]">
          {["D1", "W1", "MN", "D1", "W1", "MN"].map((p, i) => <button key={i} className={clsx(SILVER, MONO, "w-[13px]")}>{p}</button>)}
        </div>
      </div>
      <div className={clsx(col, "w-11 text-center")}><span className="h-[11px]">Bid</span><span className="h-[11px]">Price</span></div>
      <div className={clsx(col, "w-24 pl-1")}><span className="h-[11px]">News ++</span><span className="h-[11px]">High/90/15</span></div>
      <div className={col}><SymbolHead /></div>
    </div>
  );
}

function Signal({ kind }: { kind: string }) {
  if (kind === "u" || kind === "d") {
    return (
      <svg className="mx-auto" width="8" height="9" viewBox="0 0 8 9">
        <path
          d={kind === "u" ? "M4 0l4 4v2L5.200 4.200V9H2.800V4.200L0 6V4z" : "M4 9l4-4V3L5.200 4.800V0H2.800v4.800L0 3v2z"}
          fill={kind === "u" ? "#00ffff" : "#ee82ee"}
        />
      </svg>
    );
  }
  const stroke = kind === "t" ? "#008080" : kind === "b" ? "#a0522d" : "#696969";
  return (
    <svg className="mx-auto" width="8" height="8" viewBox="0 0 8 8" fill="none" stroke={stroke}>
      <path d="M0 .5h2.500v7H0M8 .5H5.500v7H8M0 2.500h8M0 5.500h8" />
    </svg>
  );
}

function SymbolCells({ symbol }: { symbol: string }) {
  return (
    <>
      <td><button className={clsx(SILVER, "w-[13px] text-[11px]")}>~</button></td>
      <td><button className={clsx(GOLD, "w-[45px] text-[11px]", TAHOMA)}>{symbol}</button></td>
    </>
  );
}

function TradeCells({ pair, marked }: { pair: Pair; marked?: boolean }) {
  const open = pair.side !== "";
  const loss = pair.profit.startsWith("-");
  const button = "flex h-[11px] w-[15px] items-center justify-center rounded-[1px] text-[9px] leading-none";
  return (
    <>
      <td><button className="flex h-[11px] w-[15px] items-center justify-center bg-[#00ffff] text-[10px] leading-none text-[#06343a]">L</button></td>
      <td><button className="flex h-[11px] w-[15px] items-center justify-center bg-[#ee82ee] text-[10px] leading-none text-[#2c0a2c]">S</button></td>
      <td>
        <div className="flex">
          <button className={clsx(button, "bg-[#808080]", open ? "font-bold text-white" : "text-black")}>C</button>
          <button className={clsx(button, "bg-[#808080]", pair.side === "L" ? "font-bold text-white" : "text-black")}>CL</button>
          <button className={clsx(button, "bg-[#808080]", pair.side === "S" ? "font-bold text-white" : "text-black")}>CS</button>
          <button className={clsx(button, "text-black", marked && open && !loss ? "bg-[#00ff00]" : "bg-[#808080]")}>C+</button>
          <button className={clsx(button, marked && open && loss ? "bg-[#ff0000] font-bold text-white" : "bg-[#808080] text-black")}>C-</button>
        </div>
      </td>
    </>
  );
}

const COLUMN_WIDTHS = [
  "w-[13px]", "w-[13px]", "w-[14px]", "w-[15px]", "w-[47px]", "w-[16px]", "w-[16px]", "w-[79px]",
  "w-[30px]", "w-[35px]", "w-[20px]", "w-[20px]", "w-[49px]", "w-[50px]", "w-[62px]",
  "w-[27px]", "w-[29px]", "w-[15px]", "w-[15px]", "w-[15px]", "w-[15px]", "w-[16px]",
  "w-[15px]", "w-[47px]", "w-[16px]", "w-[16px]", "w-[76px]", "w-[46px]", "w-[45px]",
  "w-[15px]", "w-[15px]", "w-[15px]", "w-[15px]", "w-[15px]", "w-[15px]", "w-[44px]", "w-[96px]",
  "w-[15px]", "w-[46px]", "w-[56px]",
];

function PairRow({ pair }: { pair: Pair }) {
  const loss = pair.profit.startsWith("-");
  const cash = pair.profit.replace("-", "");
  const dim = "text-[#262626]";
  const cashColor = loss ? "text-[#ff0000]" : "text-[#00ff00]";
  const long = pair.side === "L";
  const short = pair.side === "S";
  return (
    <tr className="h-[14px] border-t-2 border-[#2f2f2f] bg-black">
      {["H", "D", "N"].map((f) => (
        <td key={f} className="border-r border-[#161616]">
          {pair.flags.includes(f) && <span className="flex h-[11px] items-center justify-center bg-[#ff0000] text-[10px] leading-none text-[#ffe000]">{f}</span>}
        </td>
      ))}
      <SymbolCells symbol={pair.symbol} />
      <TradeCells pair={pair} marked />
      <td className={long ? "text-[#008080]" : dim}>{long ? "1.25" : "0.00"}</td>
      <td className={short ? "text-[#a0522d]" : dim}>{short ? "1.25" : "0.00"}</td>
      <td className={long ? "text-[#008080]" : dim}>{long ? 1 : 0}</td>
      <td className={short ? "text-[#a0522d]" : dim}>{short ? 1 : 0}</td>
      <td className={long ? cashColor : dim}>{long ? cash : "0.00"}</td>
      <td className={short ? cashColor : dim}>{short ? cash : "0.00"}</td>
      <td className={clsx("border-r-2 border-[#1e1e1e] pr-1", cash ? cashColor : dim)}>{cash || "0.00"}</td>
      <td className="border-r border-[#1e1e1e] text-[10px] text-[#808080]">{pair.spread}</td>
      <td className="border-r border-[#1e1e1e] text-[10px] text-white">{pair.cdr}</td>
      {pair.arrows.split("").map((kind, i) => (
        <td key={i} className="border-r border-[#161616]"><Signal kind={kind} /></td>
      ))}
      <td><span className={clsx("ml-[5px] block h-[10px] w-1", COLORS[pair.bar as ColorKey].bg)} /></td>
      <SymbolCells symbol={pair.symbol} />
      <TradeCells pair={pair} />
      <td className="text-[10px] text-[#808080]">{pair.high}</td>
      <td className="text-[10px] text-[#808080]">{pair.low}</td>
      {pair.zones.map((zone, i) => (
        <td key={i}>
          <span className={clsx("ml-px flex h-[11px] w-[13px] items-center justify-center text-[9px] leading-none font-bold text-[#10202a]", COLORS[zone[2] as ColorKey].bg)}>
            {zone.slice(0, 2)}
          </span>
        </td>
      ))}
      <td className={clsx("text-[10px]", COLORS[pair.bidColor as ColorKey].text)}>{pair.bid}</td>
      <td className="border-l-2 border-[#1e1e1e] pl-1 text-left text-[8px] text-[#222]">Nothing</td>
      <SymbolCells symbol={pair.symbol} />
      <td className="border-r border-[#2f2f2f] bg-[#1e1e1e]" />
    </tr>
  );
}

function PairTable() {
  return (
    <table className={clsx("w-[1219px] table-fixed border-collapse border-b-2 border-[#2f2f2f] text-right text-xs leading-[10px] whitespace-nowrap [&_td]:h-3 [&_td]:py-0 [&_td]:leading-[10px]", MONO)}>
      <colgroup>
        {COLUMN_WIDTHS.map((width, i) => <col key={i} className={width} />)}
      </colgroup>
      <tbody>
        {PAIRS.map((pair) => <PairRow key={pair.symbol} pair={pair} />)}
      </tbody>
    </table>
  );
}

function BasketTable() {
  const head = "flex h-[10px] items-center justify-center bg-black text-[#808080]";
  return (
    <div className={clsx("mt-[3px] flex flex-col gap-[2px] text-[11px] leading-none whitespace-nowrap", MONO)}>
      <div className="flex h-[10px] gap-0.5">
        <div className="flex w-[53px] gap-px font-['DejaVu_Sans',sans-serif]">
          {["H", "D", "N"].map((f) => <button key={f} className="flex w-3 items-center justify-center bg-[#808080] text-black">{f}</button>)}
        </div>
        <span className="flex w-[46px] items-center justify-center bg-black font-['DejaVu_Sans',sans-serif] text-white">BASKET</span>
        <button className={clsx(GOLD, "w-11 font-['DejaVu_Sans',sans-serif] text-[10px]")}>Spr:0.0</button>
        <span className={clsx(head, "w-[45px] font-['DejaVu_Sans',sans-serif]")}>CSM/RT</span>
        {["M5", "M15", "H1", "H4", "D1", "W1", "MN1"].map((p) => <span key={p} className={clsx(head, "w-[23px]")}>{p}</span>)}
      </div>
      {BASKETS.map((b) => (
        <div key={b.name} className="flex h-[10px] gap-0.5">
          <div className="flex w-[38px] gap-px"><i className="w-3 bg-black" /><i className="w-3 bg-black" /><i className="w-3 bg-black" /></div>
          <button className="flex w-[13px] items-center justify-center bg-[#c0c0c0]">~</button>
          <button className="flex w-[46px] items-center justify-center bg-[#c0c0c0]">{b.name}</button>
          <button className="flex w-[14px] items-center justify-center bg-[#00ffff] text-[#06343a]">L</button>
          <button className="flex w-[14px] items-center justify-center bg-[#ee82ee]">S</button>
          <button className="flex w-[14px] items-center justify-center bg-[#808080]">C</button>
          <span className={clsx("flex w-[29px] items-center justify-center text-[#111]", b.bg)}>{b.csm}</span>
          <span className={clsx("flex w-3 items-center justify-center bg-black", COLORS[b.color as ColorKey].text)}>
            <svg width="10" height="9" fill="none" stroke="currentColor" strokeWidth="1.800"><path d={b.up ? "M5 9V1M1 5.500L5 1.500l4 4" : "M5 0v8M1 3.500L5 7.500l4-4"} /></svg>
          </span>
          {b.values.split(" ").map((v, i) => (
            <span key={i} className={clsx("flex w-[23px] items-center justify-center text-[#111]", COLORS[v[3] as ColorKey].bg)}>{v.slice(0, 3)}</span>
          ))}
        </div>
      ))}
    </div>
  );
}

function InterestTable() {
  const rows = [
    ["0.50 %", "516.31", "45.8", "Current", "text-[#ff0000]"],
    ["0.00 %", "0.00", "0.0", "Today", ""],
    ["3.98 %", "4146.18", "566.4", "2016.06.20", "text-[#00ff00]"],
    ["0.00 %", "0.00", "0.0", "2016.06.17", ""],
    ["0.00 %", "0.00", "0.0", "2016.06.16", ""],
    ["0.00 %", "0.00", "0.0", "2016.06.15", ""],
    ["3.98 %", "4146.18", "566.4", "Weekly", "text-[#00ff00]"],
  ];
  return (
    <div className={clsx("relative -mt-1 ml-[53px] h-[75px] w-[178px] bg-[#121212] px-0.5 pt-px text-[8px] leading-[9px] text-[#787878]", MONO)}>
      <table className="w-full table-fixed text-right">
        <thead>
          <tr className="text-white">
            <th className="w-10 font-normal">INTEREST</th><th className="w-[37px] font-normal">PROFIT</th>
            <th className="w-[40px] font-normal">POINTS</th><th className="pl-1.5 text-left font-normal">PERIOD</th>
          </tr>
        </thead>
        <tbody>
          {rows.map(([interest, profit, points, period, color]) => (
            <tr key={period}>
              <td className={clsx("pr-1", color)}>{interest}</td><td className={color}>{profit}</td>
              <td className={color}>{points}</td><td className="pl-1 text-left">{period}</td>
            </tr>
          ))}
        </tbody>
      </table>
    </div>
  );
}

function AccountInfo() {
  const lines = [
    "Account leverage 1/100", "Initial bal.: 100190.55", "Current bal.: 104146.18", "Profit/Loss.:  3439.32",
    "Equity......: 103629.87", "Margin......: 14612.29", "Free margin.: 89017.58", "Margin level:   709.20%",
  ];
  return (
    <div className={clsx("mt-px ml-[47px] h-[75px] w-[115px] bg-[#121212] pt-px pl-0.5 text-[8px] leading-[9px] whitespace-pre text-white", MONO)}>
      {lines.map((line) => <p key={line} className={clsx(line.startsWith("Profit") && "text-[#00ff00]")}>{line}</p>)}
    </div>
  );
}

function StrengthList() {
  const rows: [string, boolean, string, ColorKey][] = [
    ["CAD", false, "6.7", "t"], ["EUR", true, "6.4", "t"], ["AUD", true, "6.0", "s"],
    ["CHF", true, "5.5", "s"], ["USD", false, "4.6", "s"], ["GBP", false, "3.4", "r"],
  ];
  return (
    <div className={clsx("mt-[10px] ml-[182px] flex w-[63px] flex-col gap-[2px] text-[10px] leading-none", MONO)}>
      <button className="ml-[7px] flex h-[10px] w-14 items-center justify-center bg-[#c0c0c0] text-[#1e1e1e]">CSM/RT/30</button>
      {rows.map(([name, up, value, color], i) => (
        <div key={name} className="flex h-[10px]">
          <span className="w-[7px] text-[#808080]">{i + 1}</span>
          <span className={clsx("flex w-14 items-center justify-center gap-0.5 text-[#0c1c1c]", COLORS[color].bg)}>
            {name}
            <svg width="8" height="7"><path d={up ? "M0 7l4-7 4 7-4-2z" : "M0 0l4 7 4-7-4 2z"} fill="#0c1c1c" /></svg>
            {value}
          </span>
        </div>
      ))}
    </div>
  );
}

function Chart() {
  return (
    <main className="flex-1 border-l-2 border-[#b0b0b0] bg-black pb-1 pl-[3px]">
      <div className="max-w-[1535px] pt-1">
        <SettingsPanel />
        <DashboardHead />
        <div className="bg-[#1e1e1e]">
          <PairTable />
          <div className="flex h-[92px] items-start">
            <div className="h-[92px] overflow-hidden"><BasketTable /></div>
            <InterestTable />
            <AccountInfo />
            <StrengthList />
          </div>
        </div>
      </div>
    </main>
  );
}

/* ---------- terminal ---------- */

function ChartTabs() {
  return (
    <div className="flex h-[26px] items-start overflow-hidden border-t border-white bg-[#f0f0f0] pt-px text-xs leading-none text-[#777]">
      <div className="h-px w-[6px] shrink-0 bg-black" />
      <button className="h-5 w-[84px] shrink-0 border border-t-0 border-black bg-white text-[11px] leading-none text-black">GBPSGD,H1</button>
      <div className="flex h-5 min-w-0 flex-1 items-center overflow-hidden border-t border-black pl-0.5">
        {CHART_TABS.map((symbol) => (
          <button key={symbol} className="h-4 shrink-0 border-r border-[#777] pr-[9px] pl-[10px]">{symbol},M5</button>
        ))}
        <button className="shrink-0 pl-[11px]">GBPUSD</button>
      </div>
      <div className="flex h-5 items-center gap-4 border-t border-black pr-2 pl-1">
        <button aria-label="Назад"><svg width="4" height="7"><path d="M4 0v7L0 3.500z" fill="#999" /></svg></button>
        <button aria-label="Вперед"><svg width="4" height="7"><path d="M0 0v7l4-3.500z" fill="#000" /></svg></button>
      </div>
    </div>
  );
}

function OrderIcon({ type }: { type: string }) {
  return (
    <svg className="shrink-0" width="14" height="15" viewBox="0 0 14 15">
      <path d="M.5.5h8l3 3v10H.5z" fill="#fff" stroke="#555" />
      <path d="M8.500.5v3h3" fill="none" stroke="#555" />
      <circle cx="10" cy="11" r="3.500" fill={type === "sell" ? "#e0451a" : "#2196e3"} />
      <circle cx="9.200" cy="10" r="1.200" fill="#fff" opacity=".6" />
    </svg>
  );
}

function OrdersTable() {
  const head = "border-r border-[#d8dce2] pr-1 text-right font-normal";
  const td = "border-r border-[#c0c0c0] px-0.5 text-right";
  return (
    <table className="w-full table-fixed border-separate border-spacing-0 text-[11px] leading-none whitespace-nowrap">
      <colgroup>
        <col className="w-[151px]" /><col className="w-[210px]" /><col className="w-[105px]" /><col className="w-[81px]" />
        <col className="w-[105px]" /><col className="w-[116px]" /><col className="w-[116px]" /><col className="w-[116px]" />
        <col className="w-[116px]" /><col className="w-[116px]" /><col className="w-[116px]" /><col className="w-[175px]" /><col />
      </colgroup>
      <thead>
        <tr className="h-[25px] bg-linear-to-b from-white to-[#eff1f4] [&>th]:border-b-2 [&>th]:border-b-[#c8ccd0]">
          <th className="border-r border-[#d8dce2] pl-1.5 text-left font-normal">
            <span className="flex items-center gap-3">Ордер<svg width="8" height="7"><path d="M4 0l3.500 6.500H0" stroke="#e0e0e0" fill="none" /><path d="M0 7L4 0" stroke="#777" /></svg></span>
          </th>
          {["Время", "Тип", "Объем", "Символ", "Цена", "S / L", "T / P", "Цена", "Комиссия", "Своп", "Прибыль"].map((name, i) => (
            <th key={i} className={head}>{name}</th>
          ))}
          <th className="pr-1.5 text-right font-normal">Комментарий</th>
        </tr>
      </thead>
      <tbody>
        {ORDERS.map(([id, time, type, symbol, open, level, price, profit], i) => (
          <tr
            key={id}
            className={clsx(
              "h-5 [&>td]:border-b [&>td]:border-b-[#c8c8c8]",
              id === SELECTED_ORDER ? "bg-[#3399ff] text-white" : i % 2 ? "bg-[#ebebeb]" : "bg-white"
            )}
          >
            <td className="border-r border-[#c0c0c0] pl-1"><span className="flex items-center gap-[3px]">
              <OrderIcon type={type} />{id}
            </span></td>
            <td className={td}>2016.06.21 {time}</td>
            <td className={td}>{type}</td>
            <td className={td}>1.25</td>
            <td className={td}>{symbol}</td>
            <td className={td}>{open}</td>
            <td className={td}>{level}</td>
            <td className={td}>{level}</td>
            <td className={td}>{price}</td>
            <td className={td}>0.00</td>
            <td className={td}>0.00</td>
            <td className="border-r border-[#c0c0c0] pr-[5px]">
              <span className="flex items-center justify-end gap-[9px]">
                {profit}
                <button aria-label={`Закрыть ордер ${id}`}><svg width="8" height="7"><path d="M1 .5l6 6M7 .5l-6 6" stroke="#999" strokeWidth="2" /></svg></button>
              </span>
            </td>
            <td />
          </tr>
        ))}
      </tbody>
      <tfoot>
        <tr className="h-5 bg-[#c8c8c8] font-bold">
          <td colSpan={11} className="pl-1">
            <span className="flex items-center gap-1.5">
              <svg width="12" height="13"><rect x=".5" y=".5" width="11" height="12" fill="#fff" stroke="#777" /><path d="M4.500 2.500h3v3H10L6 10 2 5.500h2.500z" fill="#d8400e" /></svg>
              <span>Баланс: 104 146.18 USD&nbsp; Средства: 103 641.53&nbsp; Маржа: 14 612.29&nbsp; Свободная маржа: 89 029.24&nbsp; Уровень: 709.28%</span>
            </span>
          </td>
          <td className="pr-[23px] text-right">-504.65</td>
          <td />
        </tr>
      </tfoot>
    </table>
  );
}

function Terminal() {
  return (
    <section className="flex bg-[#f0f0f0]">
      <div className="flex w-4 flex-col items-center border-r border-[#a0a0a0]">
        <button aria-label="Закрыть терминал" className="flex h-[14px] items-center"><svg width="6" height="6"><path d="M.5.5l5 5M5.500.5l-5 5" stroke="#000" strokeWidth="1.500" /></svg></button>
        <div className="flex flex-1 items-end bg-[#ccd9e6] pb-1">
          <span className="rotate-180 text-[11px] leading-4 text-[#444] [writing-mode:vertical-rl]">Терминал</span>
        </div>
      </div>
      <div className="min-w-0 flex-1">
        <div className="flex border-t border-[#a0a0a0] bg-white">
          <div className="min-w-0 flex-1 pb-[10px]"><OrdersTable /></div>
          <div className="mr-1 flex w-[17px] flex-col items-center bg-[#f0f0f0] py-[7px]">
            <svg width="7" height="4"><path d="M0 4l3.500-4L7 4z" fill="#555" /></svg>
            <div className="mt-[40px] mb-[9px] flex w-[15px] flex-1 items-center justify-center rounded-[2px] border border-[#9a9a9a] bg-linear-to-r from-[#f4f4f4] to-[#cfcfcf]">
              <svg width="7" height="8" stroke="#777"><path d="M0 .5h7M0 3.500h7M0 6.500h7" /></svg>
            </div>
            <svg width="7" height="4"><path d="M0 0h7L3.500 4z" fill="#555" /></svg>
          </div>
        </div>
        <div className="flex h-[25px] items-start text-[11px] leading-none text-[#777]">
          <div className="h-px w-0.5 bg-black" />
          <button className="h-5 w-[73px] border border-t-0 border-black bg-white text-black">Торговля</button>
          <div className="flex h-5 flex-1 items-center border-t border-black">
            {TERMINAL_TABS.map(({ label, count }) => (
              <button key={label} className="flex h-4 items-center gap-0.5 border-r border-[#777] pr-[10px] pl-[11px]">
                {label}
                {count && <span className="pt-1.5 text-[9px] font-bold text-[#e0202c]">{count}</span>}
              </button>
            ))}
          </div>
        </div>
      </div>
    </section>
  );
}

function StatusBar() {
  const cell = "flex h-[18px] items-center border-l border-[#b0b0b0] pl-[6px]";
  return (
    <div className="flex h-6 items-center border-t border-[#a0a0a0] bg-[#f0f0f0] text-[11px] leading-none whitespace-nowrap">
      <span className="flex-1 pl-0.5">Для вызова справки нажмите F1</span>
      <span className={clsx(cell, "w-[115px]")}>Default</span>
      <span className={clsx(cell, "w-[102px]")}>2016.06.17 16:00</span>
      <span className={clsx(cell, "w-[71px]")}>O: 1.92602</span>
      <span className={clsx(cell, "w-[71px]")}>H: 1.93034</span>
      <span className={clsx(cell, "w-[68px]")}>L: 1.92567</span>
      <span className={clsx(cell, "w-[70px]")}>C: 1.92737</span>
      <span className={clsx(cell, "w-[66px]")}>V: 8582</span>
      <span className={clsx(cell, "w-[130px] gap-[3px]")}>
        <svg width="24" height="14" strokeWidth="2">
          <path d="M1 0v12M4 0v10M7 0v9M10 0v8M13 0v7M16 0v6M19 0v4M22 0v3" stroke="#6b8e23" />
          <path d="M1 12v2M4 11v3M7 10v4M10 9v5M13 8v6M16 7v7M19 5v9M22 4v10" stroke="#1f4e6e" />
        </svg>
        65108/59 kb
      </span>
    </div>
  );
}

/* ---------- taskbar ---------- */

function TaskbarDots() {
  return <span className="h-[31px] w-2 bg-[radial-gradient(#4e5d70_1px,transparent_1px)] bg-[size:3px_4px]" />;
}

function Taskbar() {
  const launcher = "flex w-[62px] items-center justify-center";
  const task = "flex w-[159px] items-center gap-1 rounded-[2px] border border-[#3d4c5e] pl-2 text-[11px] text-white shadow-[inset_0_0_0_1px_rgba(255,255,255,0.5)]";
  return (
    <footer className="flex h-10 border-t border-[#4a5a6e] bg-[#8293aa] whitespace-nowrap">
      <button aria-label="Пуск" className="flex w-[55px] items-center justify-center">
        <svg width="38" height="37" viewBox="0 0 38 37">
          <defs>
            <radialGradient id="orb" cx=".5" cy=".45" r=".6"><stop offset="0" stopColor="#a8e0f6" /><stop offset=".6" stopColor="#5a9ec4" /><stop offset="1" stopColor="#2c6a8a" /></radialGradient>
          </defs>
          <circle cx="19" cy="18.500" r="17.500" fill="url(#orb)" stroke="#b4d4e8" />
          <path d="M10 11q4-3 8-1l-1 8q-4-2-8 1z" fill="#f0562a" />
          <path d="M20 11q4 2 9-1l-1.500 8q-4 3-8.500 1z" fill="#8dc63f" />
          <path d="M9 20.500q4-3 8-1l-1 8q-4-2-8 1z" fill="#2aa4e8" />
          <path d="M19 20.500q4 2 8.500-1L26 28q-4 2-8 0z" fill="#ffd02e" />
          <ellipse cx="19" cy="10" rx="13" ry="8" fill="#fff" opacity=".22" />
        </svg>
      </button>
      <div className="flex w-[18px] items-center pl-0.5"><TaskbarDots /></div>
      <button aria-label="AIMP" className={launcher}>
        <svg width="30" height="30" viewBox="0 0 30 30"><circle cx="15" cy="15" r="14.500" fill="#222" /><circle cx="15" cy="15" r="11.500" fill="#f7a31c" /><path d="M15 9l5 10H10z" fill="none" stroke="#222" strokeWidth="3" /></svg>
      </button>
      <button aria-label="Калькулятор" className={launcher}>
        <svg width="24" height="30" viewBox="0 0 24 30">
          <rect x=".5" y=".5" width="23" height="29" rx="2" fill="#d9ecfa" stroke="#4a86c0" /><rect x="3" y="3" width="18" height="9" fill="#fff" stroke="#5b9bd5" />
          <text x="14" y="11" fontSize="8" fill="#234">0</text>
          <path d="M3 16.500h14M3 20.500h14M3 24.500h14" stroke="#5b8fc8" strokeWidth="2.500" strokeDasharray="3 1" /><path d="M19.500 15v11" stroke="#f0a030" strokeWidth="3" />
        </svg>
      </button>
      <button aria-label="Ножницы" className={launcher}>
        <svg width="32" height="32" viewBox="0 0 32 32" fill="none"><ellipse cx="10" cy="18" rx="8" ry="5" fill="#e4e4ea" stroke="#c04a50" /><ellipse cx="13" cy="10" rx="11" ry="8" fill="#f2f2f2" stroke="#d8434a" strokeWidth="2" /><path d="M7 4l15 19M16 3l2 20" stroke="#aab2bc" strokeWidth="3" /><circle cx="19" cy="27" r="3.500" stroke="#2d78b8" strokeWidth="2.500" /><circle cx="26" cy="21" r="3.500" stroke="#2d78b8" strokeWidth="2.500" /></svg>
      </button>
      <button aria-label="Chrome" className={launcher}>
        <svg width="30" height="30" viewBox="0 0 30 30"><circle cx="15" cy="15" r="14.500" fill="#34a34f" /><path d="M15 15L2.400 7.800A14.500 14.500 0 0 1 27.600 7.800z" fill="#e34133" /><path d="M15 15L27.600 7.800A14.500 14.500 0 0 1 14 29.500z" fill="#fbc116" /><path d="M27.600 7.800H15l-5 4 5 3.500z" fill="#e34133" /><circle cx="15" cy="15" r="6.800" fill="#fff" /><circle cx="15" cy="15" r="5.400" fill="#4285f4" /></svg>
      </button>
      <div className="ml-0.5 flex gap-[3px] py-px">
        <button className={clsx(task, "bg-linear-to-r from-[#f7efc0] via-[#e4cf78] to-[#f2e6a8]")}><AlpariLogo className="size-8" />9806301: Alpari-E...</button>
        <button className={clsx(task, "bg-linear-to-b from-[#a3b2c6] to-[#71839c]")}><AlpariLogo className="size-8" />9806337: Alpari-E...</button>
      </div>
      <div className="ml-auto flex items-center text-xs text-white">
        <TaskbarDots />
        <button className="w-7 pl-1 leading-none">EN</button>
        <div className="flex gap-2 pl-3">
          <svg width="16" height="17"><path d="M0 0h16v17H0z" fill="#222" /><path d="M1 1h6v6H1zM1 10h6v6H1zM9 10h6v6H9z" fill="#1b74e8" /><path d="M9 1h6v6H9z" fill="#20c8e8" /></svg>
          <svg width="16" height="17"><path d="M3 1h4v4h2v6H1V5h2z" fill="#ddd" stroke="#555" /><circle cx="11" cy="12" r="5" fill="#1da528" /><path d="M8.500 12l2 2 3-4" stroke="#fff" fill="none" strokeWidth="1.500" /></svg>
          <svg width="16" height="17"><path d="M1.500 0v16M2 1h5l1 2h6v7H8L7 8H2z" fill="#fff" stroke="#555" /><circle cx="11" cy="12" r="5" fill="#e0281a" /><path d="M9 10l4 4M13 10l-4 4" stroke="#fff" strokeWidth="1.500" /></svg>
          <svg width="16" height="17" fill="none" stroke="#fff"><path d="M5.500 4.500h10v8h-10zM8 15.500h7M11 13v2M1.500 0v4M4.500 0v4M.5 4.500h5v3h-5zM3 8v6h2" /></svg>
          <svg width="16" height="17" fill="none" stroke="#fff"><path d="M1 6h3l4-4v13l-4-4H1z" fill="#fff" stroke="#555" /><path d="M10.500 5c2 2 2 5 0 7" /></svg>
        </div>
        <div className="w-[83px] pl-1 text-center leading-[17px]"><p>9:08</p><p>21.06.2016</p></div>
        <button aria-label="Показать рабочий стол" className="h-full w-[14px] border border-[#4a5a6e] bg-linear-to-br from-[#64748a] to-[#8a9bb2]" />
      </div>
    </footer>
  );
}

export default function App() {
  return (
    <div className="flex min-h-screen flex-col overflow-hidden bg-[#f0f0f0] font-['Open_Sans',sans-serif] text-black">
      <TitleBar />
      <MenuBar />
      <Toolbar />
      <Chart />
      <ChartTabs />
      <Terminal />
      <StatusBar />
      <Taskbar />
    </div>
  );
}
